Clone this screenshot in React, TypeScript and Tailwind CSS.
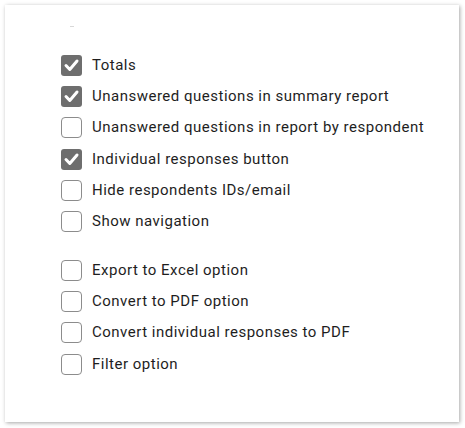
import React from 'react';

const groups: { label: string; checked: boolean }[][] = [
  [
    { label: 'Totals', checked: true },
    { label: 'Unanswered questions in summary report', checked: true },
    { label: 'Unanswered questions in report by respondent', checked: false },
    { label: 'Individual responses button', checked: true },
    { label: 'Hide respondents IDs/email', checked: false },
    { label: 'Show navigation', checked: false },
  ],
  [
    { label: 'Export to Excel option', checked: false },
    { label: 'Convert to PDF option', checked: false },
    { label: 'Convert individual responses to PDF', checked: false },
    { label: 'Filter option', checked: false },
  ],
];

function Box({ checked }: { checked: boolean }) {
  if (checked) {
    return (
      <span className="flex items-center justify-center w-[21px] h-[21px] rounded-[3px] bg-[#6e6e6e]">
        <svg width="21" height="21" viewBox="0 0 21 21">
          <polyline
            points="5,10.5 8.8,14.5 16,6"
            fill="none"
            stroke="#fff"
            strokeWidth="3"
            strokeLinecap="round"
            strokeLinejoin="round"
          />
        </svg>
      </span>
    );
  }
  return <span className="block w-[21px] h-[21px] rounded-[4px] border border-[#8c8c8c] bg-white" />;
}

export default function App() {
  return (
    <div className="w-[465px] h-[428px] bg-white pt-[5px] pl-[5px]">
      <div
        className="w-[454px] h-[417px] bg-white shadow-[1px_1px_4px_rgba(0,0,0,0.35)] pt-[21px] pl-[56px]"
        style={{ fontFamily: 'Roboto, "Liberation Sans", sans-serif' }}
      >
        <div className="h-px w-[4px] ml-[9px] bg-[#d8d8d8]" />
        <div className="mt-[23px] flex flex-col gap-[17.8px]">
          {groups.map((g, gi) => (
            <div key={gi} className="flex flex-col">
              {g.map(item => (
                <label key={item.label} className="flex items-center gap-[10px] h-[31.2px]">
                  <Box checked={item.checked} />
                  <span className="text-[15px] tracking-[0.5px] text-[#1e1e1e] leading-none">{item.label}</span>
                </label>
              ))}
            </div>
          ))}
        </div>
      </div>
    </div>
  );
}
